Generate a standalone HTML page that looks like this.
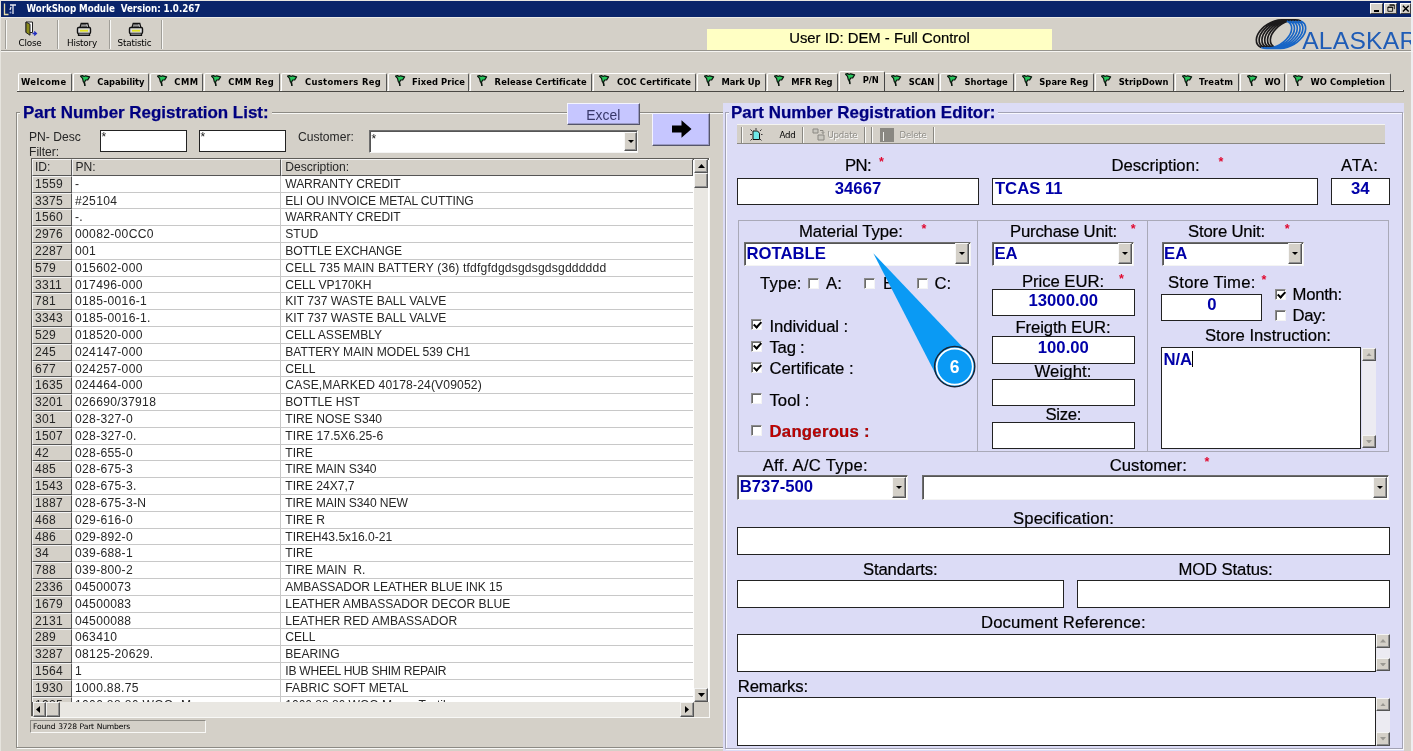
<!DOCTYPE html>
<html><head><meta charset="utf-8"><title>WorkShop Module</title>
<style>
html,body{margin:0;padding:0;}
body{width:1413px;height:751px;overflow:hidden;background:#d4d0c8;position:relative;font-family:"Liberation Sans",Arial,sans-serif;color:#000;}
.abs,.abs *{box-sizing:border-box;}
.abs{position:absolute;}
.t{position:absolute;white-space:pre;line-height:1;}
.lbl{position:absolute;white-space:pre;font-size:16.7px;line-height:18px;height:18px;color:#000;-webkit-text-stroke:0.2px #000;}
.star{position:absolute;color:#e00a30;font-size:12.5px;line-height:12px;font-weight:bold;}
.inp{position:absolute;background:#fff;border:1px solid #222;box-sizing:border-box;font-weight:bold;font-size:16.7px;color:#0000a8;white-space:pre;overflow:hidden;}
.inp.c{text-align:center;}
.combo{position:absolute;background:#fff;box-sizing:border-box;border:1px solid #6e6e6e;border-right-color:#f4f4f4;border-bottom-color:#f4f4f4;box-shadow:inset 1px 1px 0 #555;font-weight:bold;font-size:16.7px;color:#0000a8;white-space:pre;overflow:hidden;}
.dd{position:absolute;background:#d4d0c8;box-sizing:border-box;border:1px solid #f8f8f8;border-right-color:#555;border-bottom-color:#555;box-shadow:inset -1px -1px 0 #909090;}
.dd:after{content:"";position:absolute;left:50%;top:50%;margin:-1.5px 0 0 -3px;border:3px solid transparent;border-top:3.5px solid #000;border-bottom:0;}
.cb{position:absolute;width:11px;height:11px;background:#fff;box-sizing:border-box;border:1px solid #8c8c8c;border-right-color:#f4f4f4;border-bottom-color:#f4f4f4;box-shadow:inset 1px 1px 0 #6a6a6a;}
.cb.on:after{content:"";position:absolute;left:2.7px;top:-0.4px;width:2.9px;height:6.2px;border:solid #000;border-width:0 2px 2px 0;transform:rotate(42deg);}
.sbv{position:absolute;background:#e9e7e2;}
.sbb{position:absolute;background:#d4d0c8;box-sizing:border-box;border:1px solid #f4f4f4;border-right-color:#555;border-bottom-color:#555;box-shadow:inset -1px -1px 0 #909090;}
.tab{position:absolute;top:72.6px;height:18.4px;box-sizing:border-box;font-family:"DejaVu Sans Condensed","DejaVu Sans","Liberation Sans",sans-serif;font-weight:bold;font-size:9.3px;line-height:15.8px;white-space:pre;color:#000;border-left:1px solid #fff;border-top:1px solid #fff;border-right:1.5px solid #555;border-radius:2px 2px 0 0;background:#d4d0c8;}
.tab svg{position:absolute;left:5.8px;top:1.2px;}
.tab span{position:absolute;top:0;}
.grid{position:absolute;font-size:12.1px;white-space:pre;color:#262626;}
.grid div{position:absolute;box-sizing:border-box;overflow:hidden;line-height:16.8px;height:16.8px;}
.frame{position:absolute;box-sizing:border-box;border:1px solid #a9a9b8;}
.tb{position:absolute;font-family:"DejaVu Sans","Liberation Sans",sans-serif;font-size:8.6px;line-height:10px;white-space:pre;letter-spacing:-0.2px;}
</style></head><body><div id="app" style="position:absolute;left:0;top:0;width:1413px;height:751px;overflow:hidden;will-change:transform">

<div class="abs" style="left:0;top:0;width:1413px;height:1px;background:#e9e7e2"></div>
<div class="abs" style="left:1px;top:0.8px;width:1410px;height:16.2px;background:#0a246a"></div>
<div class="abs" style="left:0;top:0;width:1.2px;height:751px;background:#e6e4de"></div>
<div class="abs" style="left:1410.8px;top:0;width:2.2px;height:751px;background:#eeedf0"></div>
<svg class="abs" style="left:3px;top:2px" width="14" height="14" viewBox="0 0 14 14"><path d="M1.5 1.5v11h4" stroke="#e6dca8" stroke-width="1.3" fill="none"/><path d="M7 3h6M10 3v9M7 8l1-3" stroke="#e8e8f0" stroke-width="1.3" fill="none"/><circle cx="7.5" cy="10.5" r="1" fill="#8fa0d8"/></svg>
<div class="t" style="left:26.5px;top:4.2px;font-family:'DejaVu Sans Condensed','DejaVu Sans','Liberation Sans',sans-serif;font-weight:bold;font-size:9.7px;color:#fff;letter-spacing:-0.053px">WorkShop Module  Version: 1.0.267</div>
<div class="abs" style="left:1px;top:17px;width:1410px;height:1.4px;background:#eceae6"></div>
<div class="abs" style="left:1370px;top:2.8px;width:13.4px;height:11px;background:#d4d0c8;border:1px solid #fff;border-right-color:#404040;border-bottom-color:#404040"></div>
<div class="abs" style="left:1384px;top:2.8px;width:13.4px;height:11px;background:#d4d0c8;border:1px solid #fff;border-right-color:#404040;border-bottom-color:#404040"></div>
<div class="abs" style="left:1399.8px;top:2.8px;width:11px;height:11px;background:#d4d0c8;border:1px solid #fff;border-right-color:#404040;border-bottom-color:#404040"></div>
<div class="abs" style="left:1373.5px;top:10.4px;width:5px;height:1.7px;background:#000"></div>
<svg class="abs" style="left:1386.6px;top:4.2px" width="8.6" height="8.6" viewBox="0 0 10 10"><path d="M3 1h5.5v5M3 1.4h5.5M1 3.5h5.5v5H1zM1 4h5.5" stroke="#000" stroke-width="1" fill="none"/></svg>
<svg class="abs" style="left:1402.3px;top:4.6px" width="8" height="7.4" viewBox="0 0 9 8"><path d="M1 0.8l6.5 6.4M7.5 0.8L1 7.2" stroke="#000" stroke-width="1.6" fill="none"/></svg>
<div class="abs" style="left:1px;top:49.6px;width:1410px;height:1.2px;background:#96948e"></div>
<div class="abs" style="left:1px;top:51px;width:1412px;height:1px;background:#f6f5f2"></div>
<div class="abs" style="left:4.6px;top:20px;width:1px;height:29px;background:#a09e98"></div><div class="abs" style="left:5.6px;top:20px;width:1px;height:29px;background:#f8f8f6"></div>
<div class="abs" style="left:56.8px;top:20px;width:1px;height:29px;background:#a09e98"></div><div class="abs" style="left:57.8px;top:20px;width:1px;height:29px;background:#f8f8f6"></div>
<div class="abs" style="left:108.8px;top:20px;width:1px;height:29px;background:#a09e98"></div><div class="abs" style="left:109.8px;top:20px;width:1px;height:29px;background:#f8f8f6"></div>
<div class="abs" style="left:161px;top:20px;width:1px;height:29px;background:#a09e98"></div><div class="abs" style="left:162px;top:20px;width:1px;height:29px;background:#f8f8f6"></div>
<svg class="abs" style="left:24px;top:21px" width="15" height="16" viewBox="0 0 15 16">
<path d="M2 1h6.5v10.5H2z" fill="#fff" stroke="#222" stroke-width="1"/>
<path d="M2 1l4 2.2v11L2 11.5z" fill="#8a8a1a" stroke="#222" stroke-width="1"/>
<path d="M8.5 12.5h3.2M10.2 10.6l2.2 1.9-2.2 1.9" stroke="#2330c0" stroke-width="1.3" fill="none"/></svg>
<svg class="abs" style="left:75.5px;top:21.5px" width="16" height="15" viewBox="0 0 16 15">
<path d="M4 5.5l1.2-4h6.6l1 4" fill="#fff" stroke="#111" stroke-width="1.3"/>
<path d="M5.5 2.8h5M5.2 4.2h5.8" stroke="#222" stroke-width=".9"/>
<rect x="1.5" y="5.5" width="13" height="6" rx="1.2" fill="#dcdcdc" stroke="#111" stroke-width="1.4"/>
<rect x="4" y="7.8" width="8" height="1.8" fill="#e0e020"/>
<path d="M2.5 11.5v1.8h11v-1.8" fill="#999" stroke="#111" stroke-width="1.3"/></svg>
<svg class="abs" style="left:127.5px;top:21.5px" width="16" height="15" viewBox="0 0 16 15">
<path d="M4 5.5l1.2-4h6.6l1 4" fill="#fff" stroke="#111" stroke-width="1.3"/>
<path d="M5.5 2.8h5M5.2 4.2h5.8" stroke="#222" stroke-width=".9"/>
<rect x="1.5" y="5.5" width="13" height="6" rx="1.2" fill="#dcdcdc" stroke="#111" stroke-width="1.4"/>
<rect x="4" y="7.8" width="8" height="1.8" fill="#e0e020"/>
<path d="M2.5 11.5v1.8h11v-1.8" fill="#999" stroke="#111" stroke-width="1.3"/></svg>
<div class="tb" style="left:18.6px;top:37.6px;font-size:8.8px">Close</div>
<div class="tb" style="left:67px;top:37.6px;font-size:8.8px">History</div>
<div class="tb" style="left:117.6px;top:37.6px;font-size:8.8px">Statistic</div>
<div class="abs" style="left:707px;top:28.5px;width:345px;height:21.5px;background:#ffffc4"></div>
<div class="t" style="left:707px;width:345px;text-align:center;top:29.6px;font-size:14.85px;line-height:16px;-webkit-text-stroke:.2px #000">User ID: DEM - Full Control</div>
<svg class="abs" style="left:1250px;top:17px" width="161" height="35" viewBox="1250 17 161 35">
<path d="M1286.83 20.95A19.4 11.85 -31.3 0 0 1261.17 47.45M1289.63 20.95A19.4 11.85 -31.3 0 0 1263.97 47.45M1292.43 20.95A19.4 11.85 -31.3 0 0 1266.77 47.45M1295.23 20.95A19.4 11.85 -31.3 0 0 1269.57 47.45M1298.03 20.95A19.4 11.85 -31.3 0 0 1272.37 47.45M1300.83 20.95A19.4 11.85 -31.3 0 0 1275.17 47.45" fill="none" stroke="#1c1a1b" stroke-width="1.62"/>
<path d="M1286.83 20.95A19.4 11.85 -31.3 0 1 1261.17 47.45M1289.63 20.95A19.4 11.85 -31.3 0 1 1263.97 47.45M1292.43 20.95A19.4 11.85 -31.3 0 1 1266.77 47.45M1295.23 20.95A19.4 11.85 -31.3 0 1 1269.57 47.45M1298.03 20.95A19.4 11.85 -31.3 0 1 1272.37 47.45M1300.83 20.95A19.4 11.85 -31.3 0 1 1275.17 47.45" fill="none" stroke="#1765c6" stroke-width="1.62"/>
<text x="1302.2" y="49.4" font-family="Liberation Sans,Arial,sans-serif" font-size="24.6" fill="#1f5cb6" letter-spacing="0.25">ALASKAR</text>
</svg>
<div class="abs" style="left:17px;top:89.6px;width:1385.5px;height:1px;background:#f6f5f2"></div>
<div class="abs" style="left:17px;top:90.6px;width:1387px;height:1.8px;background:#4a4844"></div>
<div class="abs" style="left:1402.5px;top:89.6px;width:1.5px;height:2.8px;background:#4a4844"></div>
<div class="tab" style="left:17.5px;width:54.5px;"><span style="left:2.4px;letter-spacing:0.467px">Welcome</span></div>
<div class="tab" style="left:73px;width:76px;"><svg width="11" height="11.5" viewBox="0 0 11 11.5"><path d="M0.5 1.1L2.6 0.6 4 1.5 5.6 0.8 9.6 1.9 7.7 4.9 5.7 5 4.5 7.3 4.9 10.6 4.1 7.6 3.3 6.6 2.5 3.4z" fill="#27c45c" stroke="#0a150d" stroke-width="1.2" stroke-linejoin="round"/><path d="M4.4 7.4L4.9 10.8" stroke="#0a150d" stroke-width="1.2"/></svg><span style="left:23.3px;letter-spacing:-0.025px">Capability</span></div>
<div class="tab" style="left:150px;width:53px;"><svg width="11" height="11.5" viewBox="0 0 11 11.5"><path d="M0.5 1.1L2.6 0.6 4 1.5 5.6 0.8 9.6 1.9 7.7 4.9 5.7 5 4.5 7.3 4.9 10.6 4.1 7.6 3.3 6.6 2.5 3.4z" fill="#27c45c" stroke="#0a150d" stroke-width="1.2" stroke-linejoin="round"/><path d="M4.4 7.4L4.9 10.8" stroke="#0a150d" stroke-width="1.2"/></svg><span style="left:23.3px;letter-spacing:0.468px">CMM</span></div>
<div class="tab" style="left:204px;width:75.60000000000002px;"><svg width="11" height="11.5" viewBox="0 0 11 11.5"><path d="M0.5 1.1L2.6 0.6 4 1.5 5.6 0.8 9.6 1.9 7.7 4.9 5.7 5 4.5 7.3 4.9 10.6 4.1 7.6 3.3 6.6 2.5 3.4z" fill="#27c45c" stroke="#0a150d" stroke-width="1.2" stroke-linejoin="round"/><path d="M4.4 7.4L4.9 10.8" stroke="#0a150d" stroke-width="1.2"/></svg><span style="left:23.3px;letter-spacing:0.284px">CMM Reg</span></div>
<div class="tab" style="left:280.6px;width:106.19999999999999px;"><svg width="11" height="11.5" viewBox="0 0 11 11.5"><path d="M0.5 1.1L2.6 0.6 4 1.5 5.6 0.8 9.6 1.9 7.7 4.9 5.7 5 4.5 7.3 4.9 10.6 4.1 7.6 3.3 6.6 2.5 3.4z" fill="#27c45c" stroke="#0a150d" stroke-width="1.2" stroke-linejoin="round"/><path d="M4.4 7.4L4.9 10.8" stroke="#0a150d" stroke-width="1.2"/></svg><span style="left:23.3px;letter-spacing:0.381px">Customers Reg</span></div>
<div class="tab" style="left:387.8px;width:81.5px;"><svg width="11" height="11.5" viewBox="0 0 11 11.5"><path d="M0.5 1.1L2.6 0.6 4 1.5 5.6 0.8 9.6 1.9 7.7 4.9 5.7 5 4.5 7.3 4.9 10.6 4.1 7.6 3.3 6.6 2.5 3.4z" fill="#27c45c" stroke="#0a150d" stroke-width="1.2" stroke-linejoin="round"/><path d="M4.4 7.4L4.9 10.8" stroke="#0a150d" stroke-width="1.2"/></svg><span style="left:23.3px;letter-spacing:0.064px">Fixed Price</span></div>
<div class="tab" style="left:470.3px;width:121.40000000000003px;"><svg width="11" height="11.5" viewBox="0 0 11 11.5"><path d="M0.5 1.1L2.6 0.6 4 1.5 5.6 0.8 9.6 1.9 7.7 4.9 5.7 5 4.5 7.3 4.9 10.6 4.1 7.6 3.3 6.6 2.5 3.4z" fill="#27c45c" stroke="#0a150d" stroke-width="1.2" stroke-linejoin="round"/><path d="M4.4 7.4L4.9 10.8" stroke="#0a150d" stroke-width="1.2"/></svg><span style="left:23.3px;letter-spacing:0.14px">Release Certificate</span></div>
<div class="tab" style="left:592.7px;width:103.39999999999998px;"><svg width="11" height="11.5" viewBox="0 0 11 11.5"><path d="M0.5 1.1L2.6 0.6 4 1.5 5.6 0.8 9.6 1.9 7.7 4.9 5.7 5 4.5 7.3 4.9 10.6 4.1 7.6 3.3 6.6 2.5 3.4z" fill="#27c45c" stroke="#0a150d" stroke-width="1.2" stroke-linejoin="round"/><path d="M4.4 7.4L4.9 10.8" stroke="#0a150d" stroke-width="1.2"/></svg><span style="left:23.3px;letter-spacing:0.148px">COC Certificate</span></div>
<div class="tab" style="left:697.1px;width:68.79999999999995px;"><svg width="11" height="11.5" viewBox="0 0 11 11.5"><path d="M0.5 1.1L2.6 0.6 4 1.5 5.6 0.8 9.6 1.9 7.7 4.9 5.7 5 4.5 7.3 4.9 10.6 4.1 7.6 3.3 6.6 2.5 3.4z" fill="#27c45c" stroke="#0a150d" stroke-width="1.2" stroke-linejoin="round"/><path d="M4.4 7.4L4.9 10.8" stroke="#0a150d" stroke-width="1.2"/></svg><span style="left:23.3px;letter-spacing:-0.051px">Mark Up</span></div>
<div class="tab" style="left:766.9px;width:70.89999999999998px;"><svg width="11" height="11.5" viewBox="0 0 11 11.5"><path d="M0.5 1.1L2.6 0.6 4 1.5 5.6 0.8 9.6 1.9 7.7 4.9 5.7 5 4.5 7.3 4.9 10.6 4.1 7.6 3.3 6.6 2.5 3.4z" fill="#27c45c" stroke="#0a150d" stroke-width="1.2" stroke-linejoin="round"/><path d="M4.4 7.4L4.9 10.8" stroke="#0a150d" stroke-width="1.2"/></svg><span style="left:23.3px;letter-spacing:-0.029px">MFR Reg</span></div>
<div class="tab" style="left:838.5px;width:46.39999999999998px;top:71.2px;height:19.5px;z-index:3;border-right:1.5px solid #444;background:#d4d0c8;"><svg width="11" height="11.5" viewBox="0 0 11 11.5"><path d="M0.5 1.1L2.6 0.6 4 1.5 5.6 0.8 9.6 1.9 7.7 4.9 5.7 5 4.5 7.3 4.9 10.6 4.1 7.6 3.3 6.6 2.5 3.4z" fill="#27c45c" stroke="#0a150d" stroke-width="1.2" stroke-linejoin="round"/><path d="M4.4 7.4L4.9 10.8" stroke="#0a150d" stroke-width="1.2"/></svg><span style="left:23.3px;letter-spacing:-0.129px">P/N</span></div>
<div class="tab" style="left:884.4px;width:54.80000000000007px;"><svg width="11" height="11.5" viewBox="0 0 11 11.5"><path d="M0.5 1.1L2.6 0.6 4 1.5 5.6 0.8 9.6 1.9 7.7 4.9 5.7 5 4.5 7.3 4.9 10.6 4.1 7.6 3.3 6.6 2.5 3.4z" fill="#27c45c" stroke="#0a150d" stroke-width="1.2" stroke-linejoin="round"/><path d="M4.4 7.4L4.9 10.8" stroke="#0a150d" stroke-width="1.2"/></svg><span style="left:23.3px;letter-spacing:-0.06px">SCAN</span></div>
<div class="tab" style="left:940.2px;width:73.79999999999995px;"><svg width="11" height="11.5" viewBox="0 0 11 11.5"><path d="M0.5 1.1L2.6 0.6 4 1.5 5.6 0.8 9.6 1.9 7.7 4.9 5.7 5 4.5 7.3 4.9 10.6 4.1 7.6 3.3 6.6 2.5 3.4z" fill="#27c45c" stroke="#0a150d" stroke-width="1.2" stroke-linejoin="round"/><path d="M4.4 7.4L4.9 10.8" stroke="#0a150d" stroke-width="1.2"/></svg><span style="left:23.3px;letter-spacing:0.016px">Shortage</span></div>
<div class="tab" style="left:1015px;width:78.5px;"><svg width="11" height="11.5" viewBox="0 0 11 11.5"><path d="M0.5 1.1L2.6 0.6 4 1.5 5.6 0.8 9.6 1.9 7.7 4.9 5.7 5 4.5 7.3 4.9 10.6 4.1 7.6 3.3 6.6 2.5 3.4z" fill="#27c45c" stroke="#0a150d" stroke-width="1.2" stroke-linejoin="round"/><path d="M4.4 7.4L4.9 10.8" stroke="#0a150d" stroke-width="1.2"/></svg><span style="left:23.3px;letter-spacing:0.048px">Spare Reg</span></div>
<div class="tab" style="left:1094.5px;width:79.29999999999995px;"><svg width="11" height="11.5" viewBox="0 0 11 11.5"><path d="M0.5 1.1L2.6 0.6 4 1.5 5.6 0.8 9.6 1.9 7.7 4.9 5.7 5 4.5 7.3 4.9 10.6 4.1 7.6 3.3 6.6 2.5 3.4z" fill="#27c45c" stroke="#0a150d" stroke-width="1.2" stroke-linejoin="round"/><path d="M4.4 7.4L4.9 10.8" stroke="#0a150d" stroke-width="1.2"/></svg><span style="left:23.3px;letter-spacing:0.034px">StripDown</span></div>
<div class="tab" style="left:1174.8px;width:64.40000000000009px;"><svg width="11" height="11.5" viewBox="0 0 11 11.5"><path d="M0.5 1.1L2.6 0.6 4 1.5 5.6 0.8 9.6 1.9 7.7 4.9 5.7 5 4.5 7.3 4.9 10.6 4.1 7.6 3.3 6.6 2.5 3.4z" fill="#27c45c" stroke="#0a150d" stroke-width="1.2" stroke-linejoin="round"/><path d="M4.4 7.4L4.9 10.8" stroke="#0a150d" stroke-width="1.2"/></svg><span style="left:23.3px;letter-spacing:0.209px">Treatm</span></div>
<div class="tab" style="left:1240.2px;width:44.899999999999864px;"><svg width="11" height="11.5" viewBox="0 0 11 11.5"><path d="M0.5 1.1L2.6 0.6 4 1.5 5.6 0.8 9.6 1.9 7.7 4.9 5.7 5 4.5 7.3 4.9 10.6 4.1 7.6 3.3 6.6 2.5 3.4z" fill="#27c45c" stroke="#0a150d" stroke-width="1.2" stroke-linejoin="round"/><path d="M4.4 7.4L4.9 10.8" stroke="#0a150d" stroke-width="1.2"/></svg><span style="left:23.3px;letter-spacing:-0.272px">WO</span></div>
<div class="tab" style="left:1286.1px;width:105.0px;"><svg width="11" height="11.5" viewBox="0 0 11 11.5"><path d="M0.5 1.1L2.6 0.6 4 1.5 5.6 0.8 9.6 1.9 7.7 4.9 5.7 5 4.5 7.3 4.9 10.6 4.1 7.6 3.3 6.6 2.5 3.4z" fill="#27c45c" stroke="#0a150d" stroke-width="1.2" stroke-linejoin="round"/><path d="M4.4 7.4L4.9 10.8" stroke="#0a150d" stroke-width="1.2"/></svg><span style="left:23.3px;letter-spacing:0.127px">WO Completion</span></div>
<div class="abs" style="left:15.5px;top:111.5px;width:710.5px;height:636.7px;border:1px solid #8c8a84;box-shadow:1px 1px 0 #f8f8f6, inset 1px 1px 0 #f8f8f6"></div>
<div class="abs" style="left:20px;top:104px;width:252px;height:18px;background:#d4d0c8"></div>
<div class="t" style="left:23px;top:103.4px;font-weight:bold;font-size:16.95px;line-height:19px;color:#000080;-webkit-text-stroke:.25px #000080">Part Number Registration List:</div>
<div class="abs" style="left:567px;top:103.3px;width:72.6px;height:21.3px;background:#c6c6ff;border:1px solid #f4f4ff;border-right-color:#55556a;border-bottom-color:#55556a;box-shadow:inset -1px -1px 0 #9a9ac4"></div>
<div class="t" style="left:567px;width:72.6px;text-align:center;top:106.6px;font-size:13.9px;line-height:16px;color:#38386a">Excel</div>
<div class="abs" style="left:652px;top:113.4px;width:57.7px;height:32.2px;background:#c6c6ff;border:1px solid #f4f4ff;border-right-color:#55556a;border-bottom-color:#55556a;box-shadow:inset -1px -1px 0 #9a9ac4"></div>
<svg class="abs" style="left:671px;top:119px" width="22" height="20" viewBox="0 0 22 20"><path d="M1 6.5h9.5V1.2L20.5 10 10.5 18.8V13.5H1z" fill="#000"/></svg>
<div class="t" style="left:29px;top:131.4px;font-size:12.1px;line-height:13px;color:#262626">PN- Desc</div>
<div class="t" style="left:29px;top:145.6px;font-size:12.1px;line-height:13px;color:#262626">Filter:</div>
<div class="t" style="left:298px;top:131.4px;font-size:12.1px;line-height:13px;color:#262626">Customer:</div>
<div class="inp" style="left:99.9px;top:130px;width:87.4px;height:21.9px;font-weight:normal;font-size:12px;color:#222;line-height:13px;padding:0.4px 0 0 0.6px">*</div>
<div class="inp" style="left:199px;top:130px;width:87.4px;height:21.9px;font-weight:normal;font-size:12px;color:#222;line-height:13px;padding:0.4px 0 0 0.6px">*</div>
<div class="combo" style="left:369px;top:130.4px;width:269px;height:22.4px;font-weight:normal;font-size:12px;color:#222;line-height:13px;padding:1.6px 0 0 1.6px">*</div>
<div class="dd" style="left:624.2px;top:132px;width:12.9px;height:19.4px"></div>
<div class="abs" style="left:31px;top:157.6px;width:677.5px;height:558.9px;background:#fff;border-left:2px solid #5e5c58;border-top:2px solid #5e5c58"></div>
<div class="grid" style="left:32px;top:158.6px;width:661px;height:543.4px;overflow:hidden">
<div style="left:0;top:0;width:40px;height:17.2px;background:#d4d0c8;border-right:1.5px solid #555;border-bottom:1.5px solid #555;border-top:1px solid #f4f4f4;border-left:1px solid #f4f4f4;padding-left:2px;line-height:15.5px">ID:</div>
<div style="left:40px;top:0;width:209.3px;height:17.2px;background:#d4d0c8;border-right:1.5px solid #555;border-bottom:1.5px solid #555;border-top:1px solid #f4f4f4;border-left:1px solid #f4f4f4;padding-left:2.5px;line-height:15.5px">PN:</div>
<div style="left:249.3px;top:0;width:411.7px;height:17.2px;background:#d4d0c8;border-right:1.5px solid #555;border-bottom:1.5px solid #555;border-top:1px solid #f4f4f4;border-left:1px solid #f4f4f4;padding-left:3px;line-height:15.5px">Description:</div>
<div style="left:0;top:17.2px;width:40px;background:#d4d0c8;border-right:1.5px solid #555;border-bottom:1.5px solid #555;border-top:1px solid #f4f4f4;border-left:1px solid #f4f4f4;padding-left:2px;line-height:15.6px;letter-spacing:.25px">1559</div><div style="left:40px;top:17.2px;width:209.3px;border-right:1px solid #c8c8c8;border-bottom:1px solid #c8c8c8;padding-left:3px;line-height:16.2px;letter-spacing:.32px">-</div><div style="left:249.3px;top:17.2px;width:411.7px;border-bottom:1px solid #c8c8c8;padding-left:4px;line-height:16.2px;letter-spacing:-0.108px;">WARRANTY CREDIT</div>
<div style="left:0;top:34.0px;width:40px;background:#d4d0c8;border-right:1.5px solid #555;border-bottom:1.5px solid #555;border-top:1px solid #f4f4f4;border-left:1px solid #f4f4f4;padding-left:2px;line-height:15.6px;letter-spacing:.25px">3375</div><div style="left:40px;top:34.0px;width:209.3px;border-right:1px solid #c8c8c8;border-bottom:1px solid #c8c8c8;padding-left:3px;line-height:16.2px;letter-spacing:.32px">#25104</div><div style="left:249.3px;top:34.0px;width:411.7px;border-bottom:1px solid #c8c8c8;padding-left:4px;line-height:16.2px;letter-spacing:-0.142px;">ELI OU INVOICE METAL CUTTING</div>
<div style="left:0;top:50.8px;width:40px;background:#d4d0c8;border-right:1.5px solid #555;border-bottom:1.5px solid #555;border-top:1px solid #f4f4f4;border-left:1px solid #f4f4f4;padding-left:2px;line-height:15.6px;letter-spacing:.25px">1560</div><div style="left:40px;top:50.8px;width:209.3px;border-right:1px solid #c8c8c8;border-bottom:1px solid #c8c8c8;padding-left:3px;line-height:16.2px;letter-spacing:.32px">-.</div><div style="left:249.3px;top:50.8px;width:411.7px;border-bottom:1px solid #c8c8c8;padding-left:4px;line-height:16.2px;letter-spacing:-0.108px;">WARRANTY CREDIT</div>
<div style="left:0;top:67.6px;width:40px;background:#d4d0c8;border-right:1.5px solid #555;border-bottom:1.5px solid #555;border-top:1px solid #f4f4f4;border-left:1px solid #f4f4f4;padding-left:2px;line-height:15.6px;letter-spacing:.25px">2976</div><div style="left:40px;top:67.6px;width:209.3px;border-right:1px solid #c8c8c8;border-bottom:1px solid #c8c8c8;padding-left:3px;line-height:16.2px;letter-spacing:.32px">00082-00CC0</div><div style="left:249.3px;top:67.6px;width:411.7px;border-bottom:1px solid #c8c8c8;padding-left:4px;line-height:16.2px;">STUD</div>
<div style="left:0;top:84.4px;width:40px;background:#d4d0c8;border-right:1.5px solid #555;border-bottom:1.5px solid #555;border-top:1px solid #f4f4f4;border-left:1px solid #f4f4f4;padding-left:2px;line-height:15.6px;letter-spacing:.25px">2287</div><div style="left:40px;top:84.4px;width:209.3px;border-right:1px solid #c8c8c8;border-bottom:1px solid #c8c8c8;padding-left:3px;line-height:16.2px;letter-spacing:.32px">001</div><div style="left:249.3px;top:84.4px;width:411.7px;border-bottom:1px solid #c8c8c8;padding-left:4px;line-height:16.2px;letter-spacing:-0.105px;">BOTTLE EXCHANGE</div>
<div style="left:0;top:101.2px;width:40px;background:#d4d0c8;border-right:1.5px solid #555;border-bottom:1.5px solid #555;border-top:1px solid #f4f4f4;border-left:1px solid #f4f4f4;padding-left:2px;line-height:15.6px;letter-spacing:.25px">579</div><div style="left:40px;top:101.2px;width:209.3px;border-right:1px solid #c8c8c8;border-bottom:1px solid #c8c8c8;padding-left:3px;line-height:16.2px;letter-spacing:.32px">015602-000</div><div style="left:249.3px;top:101.2px;width:411.7px;border-bottom:1px solid #c8c8c8;padding-left:4px;line-height:16.2px;letter-spacing:0.177px;">CELL 735 MAIN BATTERY (36) tfdfgfdgdsgdsgdsgdddddd</div>
<div style="left:0;top:118.0px;width:40px;background:#d4d0c8;border-right:1.5px solid #555;border-bottom:1.5px solid #555;border-top:1px solid #f4f4f4;border-left:1px solid #f4f4f4;padding-left:2px;line-height:15.6px;letter-spacing:.25px">3311</div><div style="left:40px;top:118.0px;width:209.3px;border-right:1px solid #c8c8c8;border-bottom:1px solid #c8c8c8;padding-left:3px;line-height:16.2px;letter-spacing:.32px">017496-000</div><div style="left:249.3px;top:118.0px;width:411.7px;border-bottom:1px solid #c8c8c8;padding-left:4px;line-height:16.2px;">CELL VP170KH</div>
<div style="left:0;top:134.8px;width:40px;background:#d4d0c8;border-right:1.5px solid #555;border-bottom:1.5px solid #555;border-top:1px solid #f4f4f4;border-left:1px solid #f4f4f4;padding-left:2px;line-height:15.6px;letter-spacing:.25px">781</div><div style="left:40px;top:134.8px;width:209.3px;border-right:1px solid #c8c8c8;border-bottom:1px solid #c8c8c8;padding-left:3px;line-height:16.2px;letter-spacing:.32px">0185-0016-1</div><div style="left:249.3px;top:134.8px;width:411.7px;border-bottom:1px solid #c8c8c8;padding-left:4px;line-height:16.2px;">KIT 737 WASTE BALL VALVE</div>
<div style="left:0;top:151.6px;width:40px;background:#d4d0c8;border-right:1.5px solid #555;border-bottom:1.5px solid #555;border-top:1px solid #f4f4f4;border-left:1px solid #f4f4f4;padding-left:2px;line-height:15.6px;letter-spacing:.25px">3343</div><div style="left:40px;top:151.6px;width:209.3px;border-right:1px solid #c8c8c8;border-bottom:1px solid #c8c8c8;padding-left:3px;line-height:16.2px;letter-spacing:.32px">0185-0016-1.</div><div style="left:249.3px;top:151.6px;width:411.7px;border-bottom:1px solid #c8c8c8;padding-left:4px;line-height:16.2px;">KIT 737 WASTE BALL VALVE</div>
<div style="left:0;top:168.4px;width:40px;background:#d4d0c8;border-right:1.5px solid #555;border-bottom:1.5px solid #555;border-top:1px solid #f4f4f4;border-left:1px solid #f4f4f4;padding-left:2px;line-height:15.6px;letter-spacing:.25px">529</div><div style="left:40px;top:168.4px;width:209.3px;border-right:1px solid #c8c8c8;border-bottom:1px solid #c8c8c8;padding-left:3px;line-height:16.2px;letter-spacing:.32px">018520-000</div><div style="left:249.3px;top:168.4px;width:411.7px;border-bottom:1px solid #c8c8c8;padding-left:4px;line-height:16.2px;">CELL ASSEMBLY</div>
<div style="left:0;top:185.2px;width:40px;background:#d4d0c8;border-right:1.5px solid #555;border-bottom:1.5px solid #555;border-top:1px solid #f4f4f4;border-left:1px solid #f4f4f4;padding-left:2px;line-height:15.6px;letter-spacing:.25px">245</div><div style="left:40px;top:185.2px;width:209.3px;border-right:1px solid #c8c8c8;border-bottom:1px solid #c8c8c8;padding-left:3px;line-height:16.2px;letter-spacing:.32px">024147-000</div><div style="left:249.3px;top:185.2px;width:411.7px;border-bottom:1px solid #c8c8c8;padding-left:4px;line-height:16.2px;">BATTERY MAIN MODEL 539 CH1</div>
<div style="left:0;top:202.0px;width:40px;background:#d4d0c8;border-right:1.5px solid #555;border-bottom:1.5px solid #555;border-top:1px solid #f4f4f4;border-left:1px solid #f4f4f4;padding-left:2px;line-height:15.6px;letter-spacing:.25px">677</div><div style="left:40px;top:202.0px;width:209.3px;border-right:1px solid #c8c8c8;border-bottom:1px solid #c8c8c8;padding-left:3px;line-height:16.2px;letter-spacing:.32px">024257-000</div><div style="left:249.3px;top:202.0px;width:411.7px;border-bottom:1px solid #c8c8c8;padding-left:4px;line-height:16.2px;">CELL</div>
<div style="left:0;top:218.8px;width:40px;background:#d4d0c8;border-right:1.5px solid #555;border-bottom:1.5px solid #555;border-top:1px solid #f4f4f4;border-left:1px solid #f4f4f4;padding-left:2px;line-height:15.6px;letter-spacing:.25px">1635</div><div style="left:40px;top:218.8px;width:209.3px;border-right:1px solid #c8c8c8;border-bottom:1px solid #c8c8c8;padding-left:3px;line-height:16.2px;letter-spacing:.32px">024464-000</div><div style="left:249.3px;top:218.8px;width:411.7px;border-bottom:1px solid #c8c8c8;padding-left:4px;line-height:16.2px;letter-spacing:0.155px;">CASE,MARKED 40178-24(V09052)</div>
<div style="left:0;top:235.6px;width:40px;background:#d4d0c8;border-right:1.5px solid #555;border-bottom:1.5px solid #555;border-top:1px solid #f4f4f4;border-left:1px solid #f4f4f4;padding-left:2px;line-height:15.6px;letter-spacing:.25px">3201</div><div style="left:40px;top:235.6px;width:209.3px;border-right:1px solid #c8c8c8;border-bottom:1px solid #c8c8c8;padding-left:3px;line-height:16.2px;letter-spacing:.32px">026690/37918</div><div style="left:249.3px;top:235.6px;width:411.7px;border-bottom:1px solid #c8c8c8;padding-left:4px;line-height:16.2px;">BOTTLE HST</div>
<div style="left:0;top:252.4px;width:40px;background:#d4d0c8;border-right:1.5px solid #555;border-bottom:1.5px solid #555;border-top:1px solid #f4f4f4;border-left:1px solid #f4f4f4;padding-left:2px;line-height:15.6px;letter-spacing:.25px">301</div><div style="left:40px;top:252.4px;width:209.3px;border-right:1px solid #c8c8c8;border-bottom:1px solid #c8c8c8;padding-left:3px;line-height:16.2px;letter-spacing:.32px">028-327-0</div><div style="left:249.3px;top:252.4px;width:411.7px;border-bottom:1px solid #c8c8c8;padding-left:4px;line-height:16.2px;">TIRE NOSE S340</div>
<div style="left:0;top:269.2px;width:40px;background:#d4d0c8;border-right:1.5px solid #555;border-bottom:1.5px solid #555;border-top:1px solid #f4f4f4;border-left:1px solid #f4f4f4;padding-left:2px;line-height:15.6px;letter-spacing:.25px">1507</div><div style="left:40px;top:269.2px;width:209.3px;border-right:1px solid #c8c8c8;border-bottom:1px solid #c8c8c8;padding-left:3px;line-height:16.2px;letter-spacing:.32px">028-327-0.</div><div style="left:249.3px;top:269.2px;width:411.7px;border-bottom:1px solid #c8c8c8;padding-left:4px;line-height:16.2px;letter-spacing:0.068px;">TIRE 17.5X6.25-6</div>
<div style="left:0;top:286.0px;width:40px;background:#d4d0c8;border-right:1.5px solid #555;border-bottom:1.5px solid #555;border-top:1px solid #f4f4f4;border-left:1px solid #f4f4f4;padding-left:2px;line-height:15.6px;letter-spacing:.25px">42</div><div style="left:40px;top:286.0px;width:209.3px;border-right:1px solid #c8c8c8;border-bottom:1px solid #c8c8c8;padding-left:3px;line-height:16.2px;letter-spacing:.32px">028-655-0</div><div style="left:249.3px;top:286.0px;width:411.7px;border-bottom:1px solid #c8c8c8;padding-left:4px;line-height:16.2px;">TIRE</div>
<div style="left:0;top:302.8px;width:40px;background:#d4d0c8;border-right:1.5px solid #555;border-bottom:1.5px solid #555;border-top:1px solid #f4f4f4;border-left:1px solid #f4f4f4;padding-left:2px;line-height:15.6px;letter-spacing:.25px">485</div><div style="left:40px;top:302.8px;width:209.3px;border-right:1px solid #c8c8c8;border-bottom:1px solid #c8c8c8;padding-left:3px;line-height:16.2px;letter-spacing:.32px">028-675-3</div><div style="left:249.3px;top:302.8px;width:411.7px;border-bottom:1px solid #c8c8c8;padding-left:4px;line-height:16.2px;letter-spacing:-0.111px;">TIRE MAIN S340</div>
<div style="left:0;top:319.6px;width:40px;background:#d4d0c8;border-right:1.5px solid #555;border-bottom:1.5px solid #555;border-top:1px solid #f4f4f4;border-left:1px solid #f4f4f4;padding-left:2px;line-height:15.6px;letter-spacing:.25px">1543</div><div style="left:40px;top:319.6px;width:209.3px;border-right:1px solid #c8c8c8;border-bottom:1px solid #c8c8c8;padding-left:3px;line-height:16.2px;letter-spacing:.32px">028-675-3.</div><div style="left:249.3px;top:319.6px;width:411.7px;border-bottom:1px solid #c8c8c8;padding-left:4px;line-height:16.2px;">TIRE 24X7,7</div>
<div style="left:0;top:336.4px;width:40px;background:#d4d0c8;border-right:1.5px solid #555;border-bottom:1.5px solid #555;border-top:1px solid #f4f4f4;border-left:1px solid #f4f4f4;padding-left:2px;line-height:15.6px;letter-spacing:.25px">1887</div><div style="left:40px;top:336.4px;width:209.3px;border-right:1px solid #c8c8c8;border-bottom:1px solid #c8c8c8;padding-left:3px;line-height:16.2px;letter-spacing:.32px">028-675-3-N</div><div style="left:249.3px;top:336.4px;width:411.7px;border-bottom:1px solid #c8c8c8;padding-left:4px;line-height:16.2px;letter-spacing:-0.102px;">TIRE MAIN S340 NEW</div>
<div style="left:0;top:353.2px;width:40px;background:#d4d0c8;border-right:1.5px solid #555;border-bottom:1.5px solid #555;border-top:1px solid #f4f4f4;border-left:1px solid #f4f4f4;padding-left:2px;line-height:15.6px;letter-spacing:.25px">468</div><div style="left:40px;top:353.2px;width:209.3px;border-right:1px solid #c8c8c8;border-bottom:1px solid #c8c8c8;padding-left:3px;line-height:16.2px;letter-spacing:.32px">029-616-0</div><div style="left:249.3px;top:353.2px;width:411.7px;border-bottom:1px solid #c8c8c8;padding-left:4px;line-height:16.2px;">TIRE R</div>
<div style="left:0;top:370.0px;width:40px;background:#d4d0c8;border-right:1.5px solid #555;border-bottom:1.5px solid #555;border-top:1px solid #f4f4f4;border-left:1px solid #f4f4f4;padding-left:2px;line-height:15.6px;letter-spacing:.25px">486</div><div style="left:40px;top:370.0px;width:209.3px;border-right:1px solid #c8c8c8;border-bottom:1px solid #c8c8c8;padding-left:3px;line-height:16.2px;letter-spacing:.32px">029-892-0</div><div style="left:249.3px;top:370.0px;width:411.7px;border-bottom:1px solid #c8c8c8;padding-left:4px;line-height:16.2px;">TIREH43.5x16.0-21</div>
<div style="left:0;top:386.8px;width:40px;background:#d4d0c8;border-right:1.5px solid #555;border-bottom:1.5px solid #555;border-top:1px solid #f4f4f4;border-left:1px solid #f4f4f4;padding-left:2px;line-height:15.6px;letter-spacing:.25px">34</div><div style="left:40px;top:386.8px;width:209.3px;border-right:1px solid #c8c8c8;border-bottom:1px solid #c8c8c8;padding-left:3px;line-height:16.2px;letter-spacing:.32px">039-688-1</div><div style="left:249.3px;top:386.8px;width:411.7px;border-bottom:1px solid #c8c8c8;padding-left:4px;line-height:16.2px;">TIRE</div>
<div style="left:0;top:403.6px;width:40px;background:#d4d0c8;border-right:1.5px solid #555;border-bottom:1.5px solid #555;border-top:1px solid #f4f4f4;border-left:1px solid #f4f4f4;padding-left:2px;line-height:15.6px;letter-spacing:.25px">788</div><div style="left:40px;top:403.6px;width:209.3px;border-right:1px solid #c8c8c8;border-bottom:1px solid #c8c8c8;padding-left:3px;line-height:16.2px;letter-spacing:.32px">039-800-2</div><div style="left:249.3px;top:403.6px;width:411.7px;border-bottom:1px solid #c8c8c8;padding-left:4px;line-height:16.2px;">TIRE MAIN  R.</div>
<div style="left:0;top:420.4px;width:40px;background:#d4d0c8;border-right:1.5px solid #555;border-bottom:1.5px solid #555;border-top:1px solid #f4f4f4;border-left:1px solid #f4f4f4;padding-left:2px;line-height:15.6px;letter-spacing:.25px">2336</div><div style="left:40px;top:420.4px;width:209.3px;border-right:1px solid #c8c8c8;border-bottom:1px solid #c8c8c8;padding-left:3px;line-height:16.2px;letter-spacing:.32px">04500073</div><div style="left:249.3px;top:420.4px;width:411.7px;border-bottom:1px solid #c8c8c8;padding-left:4px;line-height:16.2px;letter-spacing:-0.062px;">AMBASSADOR LEATHER BLUE INK 15</div>
<div style="left:0;top:437.2px;width:40px;background:#d4d0c8;border-right:1.5px solid #555;border-bottom:1.5px solid #555;border-top:1px solid #f4f4f4;border-left:1px solid #f4f4f4;padding-left:2px;line-height:15.6px;letter-spacing:.25px">1679</div><div style="left:40px;top:437.2px;width:209.3px;border-right:1px solid #c8c8c8;border-bottom:1px solid #c8c8c8;padding-left:3px;line-height:16.2px;letter-spacing:.32px">04500083</div><div style="left:249.3px;top:437.2px;width:411.7px;border-bottom:1px solid #c8c8c8;padding-left:4px;line-height:16.2px;">LEATHER AMBASSADOR DECOR BLUE</div>
<div style="left:0;top:454.0px;width:40px;background:#d4d0c8;border-right:1.5px solid #555;border-bottom:1.5px solid #555;border-top:1px solid #f4f4f4;border-left:1px solid #f4f4f4;padding-left:2px;line-height:15.6px;letter-spacing:.25px">2131</div><div style="left:40px;top:454.0px;width:209.3px;border-right:1px solid #c8c8c8;border-bottom:1px solid #c8c8c8;padding-left:3px;line-height:16.2px;letter-spacing:.32px">04500088</div><div style="left:249.3px;top:454.0px;width:411.7px;border-bottom:1px solid #c8c8c8;padding-left:4px;line-height:16.2px;">LEATHER RED AMBASSADOR</div>
<div style="left:0;top:470.8px;width:40px;background:#d4d0c8;border-right:1.5px solid #555;border-bottom:1.5px solid #555;border-top:1px solid #f4f4f4;border-left:1px solid #f4f4f4;padding-left:2px;line-height:15.6px;letter-spacing:.25px">289</div><div style="left:40px;top:470.8px;width:209.3px;border-right:1px solid #c8c8c8;border-bottom:1px solid #c8c8c8;padding-left:3px;line-height:16.2px;letter-spacing:.32px">063410</div><div style="left:249.3px;top:470.8px;width:411.7px;border-bottom:1px solid #c8c8c8;padding-left:4px;line-height:16.2px;">CELL</div>
<div style="left:0;top:487.6px;width:40px;background:#d4d0c8;border-right:1.5px solid #555;border-bottom:1.5px solid #555;border-top:1px solid #f4f4f4;border-left:1px solid #f4f4f4;padding-left:2px;line-height:15.6px;letter-spacing:.25px">3287</div><div style="left:40px;top:487.6px;width:209.3px;border-right:1px solid #c8c8c8;border-bottom:1px solid #c8c8c8;padding-left:3px;line-height:16.2px;letter-spacing:.32px">08125-20629.</div><div style="left:249.3px;top:487.6px;width:411.7px;border-bottom:1px solid #c8c8c8;padding-left:4px;line-height:16.2px;">BEARING</div>
<div style="left:0;top:504.4px;width:40px;background:#d4d0c8;border-right:1.5px solid #555;border-bottom:1.5px solid #555;border-top:1px solid #f4f4f4;border-left:1px solid #f4f4f4;padding-left:2px;line-height:15.6px;letter-spacing:.25px">1564</div><div style="left:40px;top:504.4px;width:209.3px;border-right:1px solid #c8c8c8;border-bottom:1px solid #c8c8c8;padding-left:3px;line-height:16.2px;letter-spacing:.32px">1</div><div style="left:249.3px;top:504.4px;width:411.7px;border-bottom:1px solid #c8c8c8;padding-left:4px;line-height:16.2px;letter-spacing:-0.264px;">IB WHEEL HUB SHIM REPAIR</div>
<div style="left:0;top:521.2px;width:40px;background:#d4d0c8;border-right:1.5px solid #555;border-bottom:1.5px solid #555;border-top:1px solid #f4f4f4;border-left:1px solid #f4f4f4;padding-left:2px;line-height:15.6px;letter-spacing:.25px">1930</div><div style="left:40px;top:521.2px;width:209.3px;border-right:1px solid #c8c8c8;border-bottom:1px solid #c8c8c8;padding-left:3px;line-height:16.2px;letter-spacing:.32px">1000.88.75</div><div style="left:249.3px;top:521.2px;width:411.7px;border-bottom:1px solid #c8c8c8;padding-left:4px;line-height:16.2px;letter-spacing:0.079px;">FABRIC SOFT METAL</div>
<div style="left:0;top:538.0px;width:40px;background:#d4d0c8;border-right:1.5px solid #555;border-bottom:1.5px solid #555;border-top:1px solid #f4f4f4;border-left:1px solid #f4f4f4;padding-left:2px;line-height:15.6px;letter-spacing:.25px">1925</div><div style="left:40px;top:538.0px;width:209.3px;border-right:1px solid #c8c8c8;border-bottom:1px solid #c8c8c8;padding-left:3px;line-height:16.2px;letter-spacing:.32px">1000.88.86 WOO. Moon</div><div style="left:249.3px;top:538.0px;width:411.7px;border-bottom:1px solid #c8c8c8;padding-left:4px;line-height:16.2px;letter-spacing:-0.054px;">1000.88.86 WOO Moon, Textile</div>
</div>
<div class="sbv" style="left:693.5px;top:159.1px;width:14.5px;height:542.9px"></div>
<div class="sbb" style="left:693.5px;top:159.1px;width:14.5px;height:14px"></div>
<svg class="abs" style="left:697.5px;top:164.1px" width="7" height="4" viewBox="0 0 7 4"><path d="M0 4L3.5 0 7 4z" fill="#000"/></svg>
<div class="sbb" style="left:693.5px;top:173.1px;width:14.5px;height:14.5px"></div>
<div class="sbb" style="left:693.5px;top:687.6px;width:14.5px;height:14.4px"></div>
<svg class="abs" style="left:697.5px;top:693.2px" width="7" height="4" viewBox="0 0 7 4"><path d="M0 0L3.5 4 7 0z" fill="#000"/></svg>
<div class="sbv" style="left:32.5px;top:702px;width:661px;height:14.5px"></div>
<div class="sbb" style="left:32.5px;top:702px;width:13.5px;height:14.5px"></div>
<svg class="abs" style="left:36.2px;top:706px" width="4" height="7" viewBox="0 0 4 7"><path d="M4 0L0 3.5 4 7z" fill="#000"/></svg>
<div class="sbb" style="left:46px;top:702px;width:14px;height:14.5px"></div>
<div class="sbb" style="left:679.5px;top:702px;width:14px;height:14.5px"></div>
<svg class="abs" style="left:685px;top:706px" width="4" height="7" viewBox="0 0 4 7"><path d="M0 0L4 3.5 0 7z" fill="#000"/></svg>
<div class="abs" style="left:693.5px;top:702px;width:15px;height:14.5px;background:#d4d0c8"></div>
<div class="abs" style="left:708.5px;top:157.6px;width:1.2px;height:560px;background:#f8f8f6"></div>
<div class="abs" style="left:31px;top:716.5px;width:678.7px;height:1.2px;background:#f8f8f6"></div>
<div class="abs" style="left:29.5px;top:720.2px;width:176.5px;height:12.4px;background:#d4d0c8;border:1px solid #8c8a84;border-right-color:#f8f8f6;border-bottom-color:#f8f8f6"></div>
<div class="tb" style="left:33px;top:721.6px;font-size:7.6px;letter-spacing:-0.16px;word-spacing:0.5px">Found 3728 Part Numbers</div>
<div class="abs" style="left:723px;top:103px;width:681px;height:648px;background:#dcdcf6"></div>
<div class="abs" style="left:724.5px;top:112px;width:678px;height:637px;border:1px solid #a2a2b4;box-shadow:1px 1px 0 #f8f8ff, inset 1px 1px 0 #f8f8ff"></div>
<div class="abs" style="left:729px;top:104px;width:269px;height:18px;background:#dcdcf6"></div>
<div class="t" style="left:731px;top:103.4px;font-weight:bold;font-size:16.95px;line-height:19px;color:#000080;-webkit-text-stroke:.25px #000080">Part Number Registration Editor:</div>
<div class="abs" style="left:737.2px;top:124.3px;width:648.3px;height:20.2px;background:#d4d0c8;border-top:1px solid #f4f4f0;border-bottom:1px solid #8a8882"></div>
<div class="abs" style="left:740.5px;top:127px;width:1px;height:15.5px;background:#8a8882"></div><div class="abs" style="left:741.5px;top:127px;width:1px;height:15.5px;background:#fafaf8"></div>
<div class="abs" style="left:802.3px;top:127px;width:1px;height:15.5px;background:#8a8882"></div><div class="abs" style="left:803.3px;top:127px;width:1px;height:15.5px;background:#fafaf8"></div>
<div class="abs" style="left:864.2px;top:127px;width:1px;height:15.5px;background:#8a8882"></div><div class="abs" style="left:865.2px;top:127px;width:1px;height:15.5px;background:#fafaf8"></div>
<div class="abs" style="left:871px;top:127px;width:1px;height:15.5px;background:#8a8882"></div><div class="abs" style="left:872px;top:127px;width:1px;height:15.5px;background:#fafaf8"></div>
<div class="abs" style="left:933.2px;top:127px;width:1px;height:15.5px;background:#8a8882"></div><div class="abs" style="left:934.2px;top:127px;width:1px;height:15.5px;background:#fafaf8"></div>
<svg class="abs" style="left:749px;top:127.5px" width="14" height="14" viewBox="0 0 14 14"><path d="M4 3h4.5l2 2.2V11.5H4z" fill="#6ee8e8" stroke="#111" stroke-width="1"/><path d="M1.5 1.5l1.5 1.5M7 0v2M12.5 1.5L11 3M1 6.5h2M1.5 12.5l1.5-1.5M12.5 12.5l-1.5-1.5M12 6.5h1.5" stroke="#222" stroke-width=".9"/></svg>
<div class="tb" style="left:779.5px;top:129.6px;font-size:8.6px;color:#000">Add</div>
<svg class="abs" style="left:811.5px;top:128px" width="14" height="13" viewBox="0 0 14 13"><path d="M1 1h5v4H1zM6 7h6v5H6z" fill="#c9c7c0" stroke="#8a8882" stroke-width="1"/><path d="M8 2.5h3v3M11 5.5l-1.2-1.2M11 5.5l1.2-1.2" stroke="#8a8882" fill="none" stroke-width="1"/></svg>
<div class="tb" style="left:827.5px;top:129.6px;font-size:8.6px;color:#8e8c86;text-shadow:.8px .8px 0 #fff">Update</div>
<div class="abs" style="left:880px;top:127.5px;width:13.5px;height:14.5px;background:#8a8882"></div><div class="abs" style="left:882.5px;top:132px;width:1.6px;height:9px;background:#efefec"></div>
<div class="tb" style="left:899.5px;top:129.6px;font-size:8.6px;color:#8e8c86;text-shadow:.8px .8px 0 #fff">Delete</div>
<div class="lbl" style="left:845px;top:157.4px;font-size:16.7px;letter-spacing:-0.609px">PN:</div>
<div class="star" style="left:879.1px;top:156px">*</div>
<div class="inp c" style="left:737px;top:177.6px;width:242.0px;height:27.2px;line-height:20.8px;padding-left:0px">34667</div>
<div class="lbl" style="left:1111.4px;top:157.4px;font-size:16.7px;letter-spacing:0.008px">Description:</div>
<div class="star" style="left:1218.4px;top:156px">*</div>
<div class="inp" style="left:991.9px;top:177.6px;width:326.6px;height:27.2px;line-height:20.8px;padding-left:2px">TCAS 11</div>
<div class="lbl" style="left:1341px;top:157.4px;font-size:16.7px;letter-spacing:0.769px">ATA:</div>
<div class="inp c" style="left:1331px;top:177.6px;width:58.6px;height:27.2px;line-height:20.8px;padding-left:0px">34</div>
<div class="frame" style="left:737.7px;top:220px;width:240.3px;height:231.5px"></div>
<div class="frame" style="left:977px;top:220px;width:171px;height:231.5px"></div>
<div class="frame" style="left:1147px;top:220px;width:241.5px;height:231.5px"></div>
<div class="lbl" style="left:799px;top:223.2px;font-size:16.7px;letter-spacing:-0.05px">Material Type:</div>
<div class="star" style="left:921.4px;top:222.5px">*</div>
<div class="combo" style="left:744px;top:241.8px;width:227.0px;height:24.2px;line-height:21.6px;padding-left:1.4px">ROTABLE</div>
<div class="dd" style="left:955.4px;top:243.4px;width:13.6px;height:20.6px"></div>
<div class="lbl" style="left:760px;top:275.1px;font-size:16.7px;letter-spacing:0.174px">Type:</div>
<div class="cb" style="left:807.9px;top:278.0px"></div>
<div class="lbl" style="left:826px;top:275.1px;font-size:16.7px;letter-spacing:0.109px">A:</div>
<div class="cb" style="left:863.9px;top:278.0px"></div>
<div class="lbl" style="left:883px;top:275.1px;font-size:16.7px;letter-spacing:0.109px">B:</div>
<div class="cb" style="left:916.5px;top:278.0px"></div>
<div class="lbl" style="left:934.6px;top:275.1px;font-size:16.7px;letter-spacing:-0.144px">C:</div>
<div class="cb on" style="left:751.0px;top:319.4px"></div>
<div class="lbl" style="left:769.5px;top:317.7px;font-size:16.7px;letter-spacing:-0.107px">Individual :</div>
<div class="cb on" style="left:751.0px;top:340.8px"></div>
<div class="lbl" style="left:769.5px;top:339.1px;font-size:16.7px;letter-spacing:-0.237px">Tag :</div>
<div class="cb on" style="left:751.0px;top:361.9px"></div>
<div class="lbl" style="left:769.5px;top:360.2px;font-size:16.7px;letter-spacing:-0.031px">Certificate :</div>
<div class="cb" style="left:751.0px;top:393.4px"></div>
<div class="lbl" style="left:769.5px;top:391.7px;font-size:16.7px;letter-spacing:0.018px">Tool :</div>
<div class="cb" style="left:751.0px;top:424.9px"></div>
<div class="lbl" style="left:769.5px;top:423.2px;font-weight:bold;color:#c60000;letter-spacing:0.276px">Dangerous :</div>
<div class="lbl" style="left:1010px;top:223.2px;font-size:16.7px;letter-spacing:-0.175px">Purchase Unit:</div>
<div class="star" style="left:1130.8000000000002px;top:222.5px">*</div>
<div class="combo" style="left:992px;top:241.8px;width:141.7px;height:24.2px;line-height:21.6px;padding-left:1.4px">EA</div>
<div class="dd" style="left:1118.1px;top:243.4px;width:13.6px;height:20.6px"></div>
<div class="lbl" style="left:1022px;top:273.3px;font-size:16.7px;letter-spacing:-0.053px">Price EUR:</div>
<div class="star" style="left:1119.0px;top:273px">*</div>
<div class="inp c" style="left:992px;top:289px;width:142.7px;height:27.4px;line-height:21.0px;padding-left:0px">13000.00</div>
<div class="lbl" style="left:1015.5px;top:319.4px;font-size:16.7px;letter-spacing:-0.121px">Freigth EUR:</div>
<div class="inp c" style="left:992px;top:336.3px;width:142.7px;height:27.8px;line-height:21.4px;padding-left:0px">100.00</div>
<div class="lbl" style="left:1034.5px;top:362.7px;font-size:16.7px;letter-spacing:0.103px">Weight:</div>
<div class="inp" style="left:992px;top:379px;width:142.7px;height:27.4px;line-height:21.0px;padding-left:2px"></div>
<div class="lbl" style="left:1045.5px;top:405.9px;font-size:16.7px;letter-spacing:-0.322px">Size:</div>
<div class="inp" style="left:992px;top:421.5px;width:142.7px;height:27.3px;line-height:20.9px;padding-left:2px"></div>
<div class="lbl" style="left:1188px;top:223.2px;font-size:16.7px;letter-spacing:-0.177px">Store Unit:</div>
<div class="star" style="left:1284.8000000000002px;top:222.5px">*</div>
<div class="combo" style="left:1161.7px;top:241.8px;width:142.3px;height:24.2px;line-height:21.6px;padding-left:1.4px">EA</div>
<div class="dd" style="left:1288.4px;top:243.4px;width:13.6px;height:20.6px"></div>
<div class="lbl" style="left:1168px;top:274.4px;font-size:16.7px;letter-spacing:0.197px">Store Time:</div>
<div class="star" style="left:1261.6000000000001px;top:274px">*</div>
<div class="inp c" style="left:1161.4px;top:294.3px;width:101.1px;height:26.5px;line-height:20.1px;padding-left:0px">0</div>
<div class="cb on" style="left:1275.2px;top:289.3px"></div>
<div class="lbl" style="left:1292.6px;top:285.5px;font-size:16.7px;letter-spacing:-0.272px">Month:</div>
<div class="cb" style="left:1275.2px;top:310.0px"></div>
<div class="lbl" style="left:1292.6px;top:306.6px;font-size:16.7px;letter-spacing:-0.353px">Day:</div>
<div class="lbl" style="left:1205px;top:327.3px;font-size:16.7px;letter-spacing:-0.009px">Store Instruction:</div>
<div class="inp" style="left:1161.4px;top:347.4px;width:200px;height:101.4px;line-height:20px;padding:1.4px 0 0 1px">N/A<span style="display:inline-block;width:1px;height:16px;background:#000;vertical-align:-2px"></span></div>
<div class="sbv" style="left:1361.8px;top:347.8px;width:13.8px;height:100.6px;background:#ecebf2"></div>
<div class="sbb" style="left:1361.8px;top:347.8px;width:13.8px;height:13.5px"></div>
<svg class="abs" style="left:1365.5px;top:352.8px" width="6" height="3.5" viewBox="0 0 6 3.5"><path d="M0 3.5L3 0 6 3.5z" fill="#9a9892"/></svg>
<div class="sbb" style="left:1361.8px;top:434.9px;width:13.8px;height:13.5px"></div>
<svg class="abs" style="left:1365.5px;top:439.9px" width="6" height="3.5" viewBox="0 0 6 3.5"><path d="M0 0L3 3.5 6 0z" fill="#9a9892"/></svg>
<div class="lbl" style="left:762.7px;top:456.6px;font-size:16.7px;letter-spacing:0.277px">Aff. A/C Type:</div>
<div class="combo" style="left:737.4px;top:475px;width:170.6px;height:24.6px;line-height:22.0px;padding-left:1.4px">B737-500</div>
<div class="dd" style="left:892.4px;top:476.6px;width:13.6px;height:21.0px"></div>
<div class="combo" style="left:921.7px;top:475px;width:467.3px;height:24.6px;line-height:22.0px;padding-left:1.4px"></div>
<div class="dd" style="left:1373.4px;top:476.6px;width:13.6px;height:21.0px"></div>
<div class="lbl" style="left:1109.7px;top:456.6px;font-size:16.7px;letter-spacing:0.015px">Customer:</div>
<div class="star" style="left:1204.4px;top:455.5px">*</div>
<div class="lbl" style="left:1013px;top:509.6px;font-size:16.7px;letter-spacing:0.117px">Specification:</div>
<div class="inp" style="left:737.4px;top:527px;width:652.4px;height:28.1px;line-height:21.7px;padding-left:2px"></div>
<div class="lbl" style="left:863px;top:561.4px;font-size:16.7px;letter-spacing:-0.158px">Standarts:</div>
<div class="inp" style="left:737.4px;top:580.4px;width:326.4px;height:27.8px;line-height:21.4px;padding-left:2px"></div>
<div class="lbl" style="left:1178.5px;top:561.4px;font-size:16.7px;letter-spacing:-0.138px">MOD Status:</div>
<div class="inp" style="left:1076.6px;top:580.4px;width:313.2px;height:27.8px;line-height:21.4px;padding-left:2px"></div>
<div class="lbl" style="left:981px;top:614.0px;font-size:16.7px;letter-spacing:0.13px">Document Reference:</div>
<div class="inp" style="left:737.4px;top:633.5px;width:638.3px;height:38.0px;line-height:31.6px;padding-left:2px"></div>
<div class="sbv" style="left:1376.2px;top:634px;width:13.4px;height:37.2px;background:#ecebf2"></div>
<div class="sbb" style="left:1376.2px;top:634px;width:13.4px;height:13.5px"></div>
<svg class="abs" style="left:1379.7px;top:639px" width="6" height="3.5" viewBox="0 0 6 3.5"><path d="M0 3.5L3 0 6 3.5z" fill="#9a9892"/></svg>
<div class="sbb" style="left:1376.2px;top:657.7px;width:13.4px;height:13.5px"></div>
<svg class="abs" style="left:1379.7px;top:662.7px" width="6" height="3.5" viewBox="0 0 6 3.5"><path d="M0 0L3 3.5 6 0z" fill="#9a9892"/></svg>
<div class="lbl" style="left:737.8px;top:678.2px;font-size:16.7px;letter-spacing:-0.151px">Remarks:</div>
<div class="inp" style="left:737.4px;top:697.2px;width:638.3px;height:48.9px;line-height:42.5px;padding-left:2px"></div>
<div class="sbv" style="left:1376.2px;top:697.8px;width:13.4px;height:48.0px;background:#ecebf2"></div>
<div class="sbb" style="left:1376.2px;top:697.8px;width:13.4px;height:13.5px"></div>
<svg class="abs" style="left:1379.7px;top:702.8px" width="6" height="3.5" viewBox="0 0 6 3.5"><path d="M0 3.5L3 0 6 3.5z" fill="#9a9892"/></svg>
<div class="sbb" style="left:1376.2px;top:732.3px;width:13.4px;height:13.5px"></div>
<svg class="abs" style="left:1379.7px;top:737.3px" width="6" height="3.5" viewBox="0 0 6 3.5"><path d="M0 0L3 3.5 6 0z" fill="#9a9892"/></svg>
<svg class="abs" style="left:860px;top:245px" width="120" height="150" viewBox="860 245 120 150">
<path d="M873.3 253.2 L972.5 357.5 A20.5 20.5 0 0 1 937 376.8 Z" fill="#0a9af4"/>
<circle cx="954.7" cy="366.6" r="20.1" fill="#0a9af4" stroke="#1a2433" stroke-width="1.4"/>
<circle cx="954.7" cy="366.6" r="18" fill="none" stroke="#fff" stroke-width="1.7"/>
<text x="954.7" y="373" text-anchor="middle" font-family="Liberation Sans,Arial,sans-serif" font-weight="bold" font-size="17.5" fill="#fff">6</text>
</svg>
</div></body></html>
